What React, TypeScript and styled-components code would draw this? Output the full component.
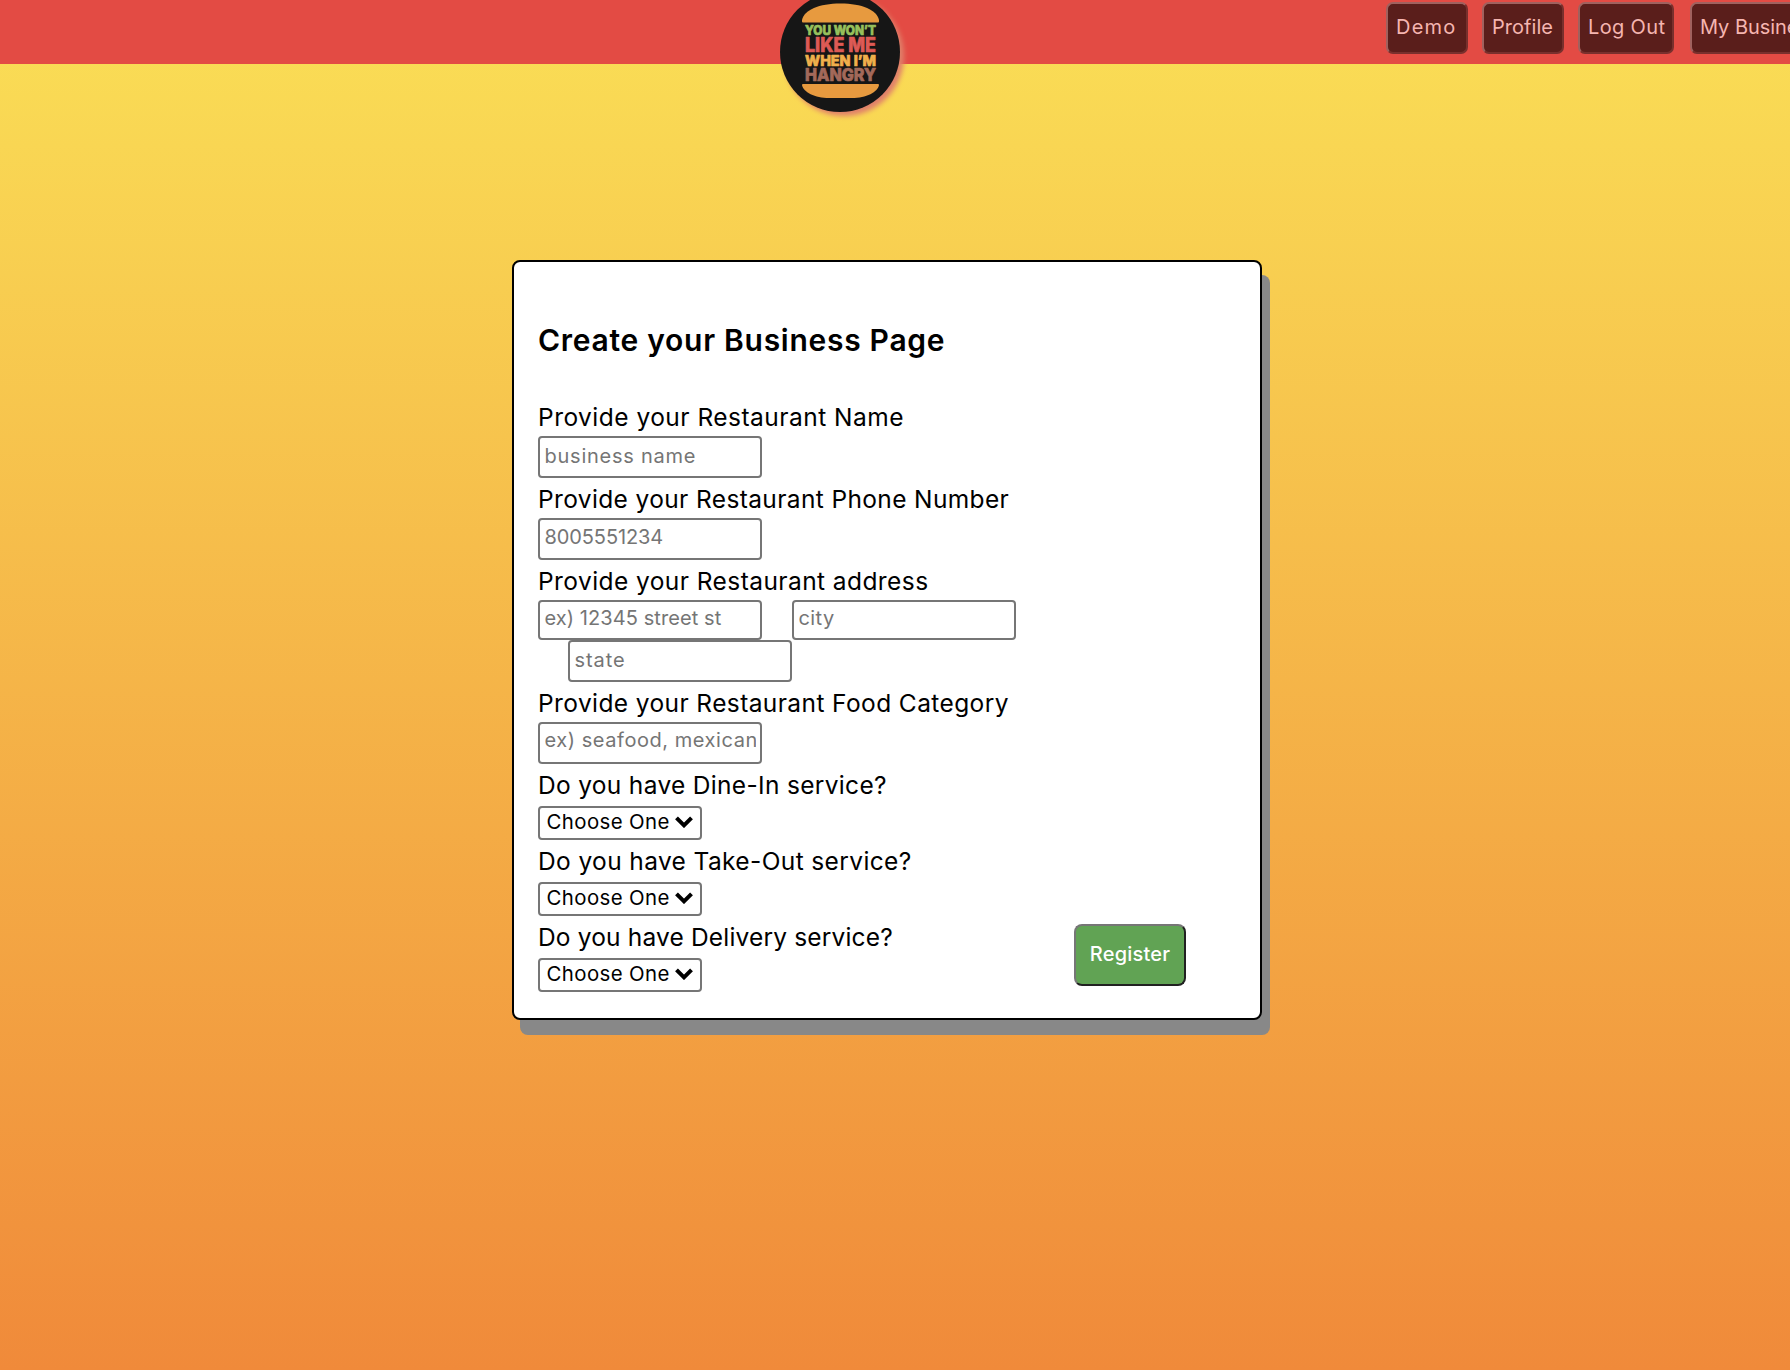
import React from "react";
import styled, { createGlobalStyle } from "styled-components";

const Global = createGlobalStyle`
  * { box-sizing: border-box; }
  html, body { margin: 0; height: 100%; }
  body {
    font-family: Inter, "Open Sans", sans-serif;
    overflow: hidden;
  }
`;

const Page = styled.div`
  display: flex;
  flex-direction: column;
  width: 100%;
  height: 1370px;
  overflow: hidden;
  background: linear-gradient(#fadf56 0px, #f08a3a 1370px);
`;

const Header = styled.header`
  display: flex;
  justify-content: space-between;
  flex: none;
  height: 64px;
  background: #e34b44;
`;

const Logo = styled.div`
  flex: none;
  width: 120px;
  height: 120px;
  margin: -8px 0 0 780px;
  border-radius: 50%;
  background: #161616;
  box-shadow: 4px 4px 5px #e0806a;
  svg { display: block; }
`;

const Nav = styled.nav`
  display: flex;
  flex: none;
  gap: 14px;
  width: 404px;
  padding-top: 2px;
`;

const NavButton = styled.button<{ $w: number; $ls: number; $gap?: number }>`
  flex: none;
  width: ${(p) => p.$w}px;
  height: 52px;
  margin: 0 0 0 ${(p) => p.$gap ?? 0}px;
  padding: 0 0 3px 8px;
  border: 2px solid;
  border-color: #a0615e #78302d #78302d #a0615e;
  border-radius: 7px;
  background: #5a1e1b;
  color: #f5b5b0;
  font: 400 20px/30px Inter, sans-serif;
  letter-spacing: ${(p) => p.$ls}px;
  text-align: left;
  white-space: nowrap;
`;

const Card = styled.form`
  display: flex;
  flex: none;
  justify-content: space-between;
  width: 750px;
  height: 760px;
  margin: 196px 0 0 512px;
  padding: 0 74px 24px 24px;
  border: 2px solid #000;
  border-radius: 8px;
  background: #fff;
  box-shadow: 8px 15px 0 #888;
`;

const Fields = styled.div`
  display: flex;
  flex-direction: column;
  align-items: flex-start;
`;

const Title = styled.h2`
  margin: 56px 0 38px;
  font-size: 30px;
  line-height: 44px;
  font-weight: 560;
  letter-spacing: 0.72px;
  white-space: nowrap;
`;

const Field = styled.div`
  display: flex;
  flex-direction: column;
  align-items: flex-start;
  margin-bottom: 4px;
`;

const Label = styled.label<{ $ls: number }>`
  height: 36px;
  font-size: 24.5px;
  line-height: 35px;
  letter-spacing: ${(p) => p.$ls}px;
  white-space: nowrap;
`;

const Input = styled.input<{ $ls: number; $h?: number; $top?: number; $bottom?: number }>`
  width: 224px;
  height: ${(p) => p.$h ?? 42}px;
  margin: 0;
  padding: ${(p) => p.$top ?? 0}px 4px ${(p) => p.$bottom ?? 4}px 4.5px;
  border: 2px solid #767676;
  border-radius: 4px;
  background: #fff;
  font: 400 20px/30px Inter, sans-serif;
  letter-spacing: ${(p) => p.$ls}px;
  &::placeholder { color: #757575; opacity: 1; }
`;

const AddressRow = styled.div<{ $indent?: number }>`
  display: flex;
  gap: 30px;
  padding-left: ${(p) => p.$indent ?? 0}px;
`;

const Select = styled.button`
  display: flex;
  align-items: center;
  justify-content: space-between;
  width: 164px;
  height: 34px;
  margin: 2px 0 0;
  padding: 0 7px 2px 6.5px;
  border: 2px solid #767676;
  border-radius: 4px;
  background: #fff;
  color: #000;
  font: 400 20.4px/28px Inter, sans-serif;
  letter-spacing: 0.4px;
  white-space: nowrap;
`;

const Register = styled.button`
  align-self: flex-end;
  width: 112px;
  height: 62px;
  margin: 0 0 8px;
  padding: 0 0 2px;
  border: 2px solid;
  border-color: #767676 #212121 #212121 #767676;
  border-radius: 8px;
  background: #61a354;
  color: #fff;
  font: 500 20px/30px Inter, sans-serif;
  letter-spacing: 0.2px;
`;

const Burger = () => (
  <svg width="120" height="120" viewBox="0 0 120 120" fontFamily="Inter, sans-serif" fontWeight="800" strokeWidth="0.7" strokeLinejoin="round">
    <path d="M22 29.5V28C24 18 39 11.5 60.500 11.500S97 18 99 28V29.500Q99 30.500 98 30.500H23Q22 30.500 22 29.500Z" fill="#e79a3f" />
    <path d="M22 93Q22 92 23 92H98Q99 92 99 93C98 100 86 106 72 106H49C35 106 23 100 22 93Z" fill="#e79a3f" />
    <text x="25" y="43" fontSize="12.800" textLength="71" lengthAdjust="spacingAndGlyphs" fill="#97c05c" stroke="#97c05c">YOU WON’T</text>
    <text x="25" y="60" fontSize="19.800" textLength="71" lengthAdjust="spacingAndGlyphs" fill="#dd5a55" stroke="#dd5a55">LIKE ME</text>
    <text x="25" y="73.700" fontSize="14.800" textLength="71" lengthAdjust="spacingAndGlyphs" fill="#f0b04c" stroke="#f0b04c">WHEN I’M</text>
    <text x="25" y="88.800" fontSize="17.200" textLength="71" lengthAdjust="spacingAndGlyphs" fill="#a3695a" stroke="#a3695a">HANGRY</text>
  </svg>
);

const Chevron = () => (
  <svg width="18" height="12" viewBox="0 0 18 12">
    <path d="M1.500 1.800L9 9.300L16.500 1.800" fill="none" stroke="#000" strokeWidth="4" />
  </svg>
);

const services = [
  { text: "Do you have Dine-In service?", ls: 0.32 },
  { text: "Do you have Take-Out service?", ls: 0.38 },
  { text: "Do you have Delivery service?", ls: 0.17 },
];

export default function App() {
  return (
    <>
      <Global />
      <Page>
        <Header>
          <Logo><Burger /></Logo>
          <Nav>
            <NavButton $w={82} $ls={1.2}>Demo</NavButton>
            <NavButton $w={82} $ls={0.05}>Profile</NavButton>
            <NavButton $w={96} $ls={0.35}>Log Out</NavButton>
            <NavButton $w={154} $ls={-0.05} $gap={2}>My Business</NavButton>
          </Nav>
        </Header>
        <Card onSubmit={(e) => e.preventDefault()}>
          <Fields>
            <Title>Create your Business Page</Title>
            <Field>
              <Label $ls={0.48}>Provide your Restaurant Name</Label>
              <Input $ls={0.75} $top={1} $bottom={3} placeholder="business name" />
            </Field>
            <Field>
              <Label $ls={0.37}>Provide your Restaurant Phone Number</Label>
              <Input $ls={-0.1} $bottom={5} placeholder="8005551234" />
            </Field>
            <Field>
              <Label $ls={0.43}>Provide your Restaurant address</Label>
              <AddressRow>
                <Input $ls={0.08} $h={40} placeholder="ex) 12345 street st" />
                <Input $ls={0.4} $h={40} placeholder="city" />
              </AddressRow>
              <AddressRow $indent={30}>
                <Input $ls={0.9} $top={1} $bottom={3} placeholder="state" />
              </AddressRow>
            </Field>
            <Field>
              <Label $ls={0.4}>Provide your Restaurant Food Category</Label>
              <Input $ls={0.55} $bottom={6} placeholder="ex) seafood, mexican" />
            </Field>
            {services.map((s) => (
              <Field key={s.text}>
                <Label $ls={s.ls}>{s.text}</Label>
                <Select type="button">Choose One<Chevron /></Select>
              </Field>
            ))}
          </Fields>
          <Register type="submit">Register</Register>
        </Card>
      </Page>
    </>
  );
}
